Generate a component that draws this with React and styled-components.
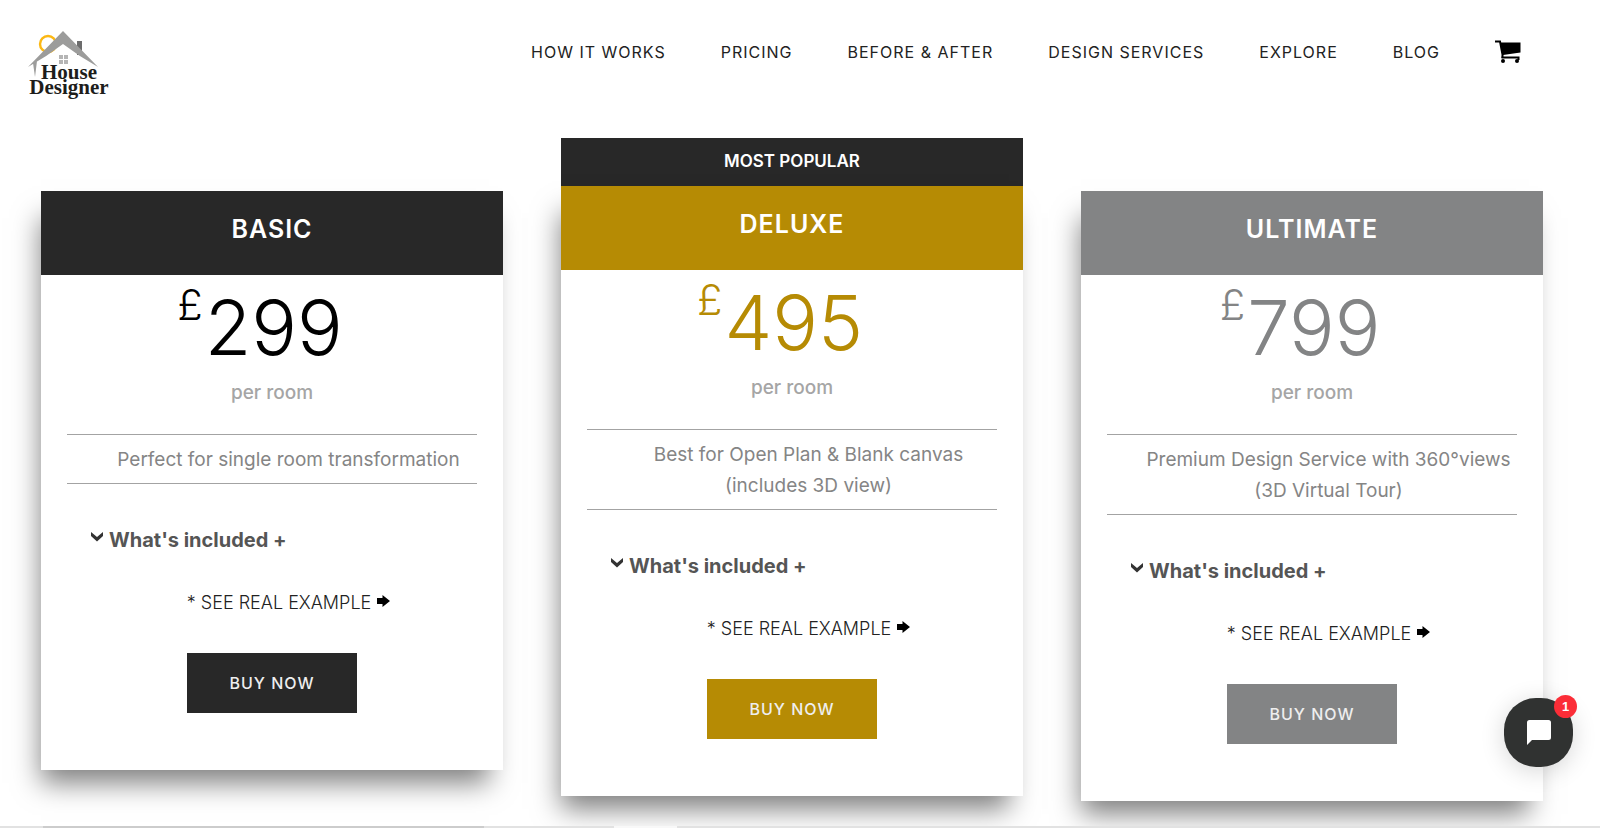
import styled, { createGlobalStyle } from "styled-components";

const plans = [
  {
    name: "BASIC",
    price: "299",
    color: "#282828",
    priceColor: "#000000",
    summary: ["Perfect for single room transformation"],
  },
  {
    name: "DELUXE",
    price: "495",
    color: "#b68b04",
    priceColor: "#b68b04",
    summary: ["Best for Open Plan & Blank canvas", "(includes 3D view)"],
    popular: true,
  },
  {
    name: "ULTIMATE",
    price: "799",
    color: "#838485",
    priceColor: "#838485",
    summary: ["Premium Design Service with 360°views", "(3D Virtual Tour)"],
  },
];

const links = [
  "HOW IT WORKS",
  "PRICING",
  "BEFORE & AFTER",
  "DESIGN SERVICES",
  "EXPLORE",
  "BLOG",
];

function Logo() {
  return (
    <LogoLink href="#home" aria-label="House Designer">
      <svg width="82" height="70" viewBox="0 0 82 70">
        <circle cx="20" cy="13" r="8" fill="none" stroke="#fcb813" strokeWidth="2.4" />
        <rect x="49" y="10" width="5" height="14" fill="#6c6c6c" />
        <path d="M0 36 L35 0 L70 36 Q52 26 35 13 Q18 26 0 36Z" fill="#9c9c9b" />
        <path d="M5 32 L9 30 L7 46Z" fill="#9c9c9b" />
        <g fill="#b5b5b5">
          <rect x="31" y="24" width="4" height="4" />
          <rect x="36" y="24" width="4" height="4" />
          <rect x="31" y="29" width="4" height="4" />
          <rect x="36" y="29" width="4" height="4" />
        </g>
        <LogoText x="41" y="48">House</LogoText>
        <LogoText x="41" y="63">Designer</LogoText>
      </svg>
    </LogoLink>
  );
}

function PlanCard({ plan }) {
  return (
    <Column $popular={plan.popular}>
      {plan.popular && <Popular>MOST POPULAR</Popular>}
      <Card>
        <CardHeader $color={plan.color}>{plan.name}</CardHeader>
        <Price $color={plan.priceColor}>
          <Currency>£</Currency>
          {plan.price}
        </Price>
        <Period>per room</Period>
        <Divider />
        <Summary>
          {plan.summary.map((line) => (
            <div key={line}>{line}</div>
          ))}
        </Summary>
        <Divider />
        <Included type="button">
          <svg width="12" height="10" viewBox="0 0 12 10">
            <path d="M0 0 L6 5 L12 0 V4 L6 9.500 L0 4Z" fill="#333333" />
          </svg>
          What's included +
        </Included>
        <Example href="#example">
          * SEE REAL EXAMPLE
          <svg width="13" height="12" viewBox="0 0 13 12">
            <path d="M0 3 H5.500 V0 L13 6 L5.500 12 V9 H0Z" fill="#000000" />
          </svg>
        </Example>
        <BuyButton $color={plan.color}>BUY NOW</BuyButton>
      </Card>
    </Column>
  );
}

export default function App() {
  return (
    <Page>
      <GlobalStyle />
      <Header>
        <Logo />
        <Nav>
          {links.map((link) => (
            <NavLink key={link} href="#menu">
              {link}
            </NavLink>
          ))}
          <CartLink href="#cart" aria-label="Cart">
            <svg width="26" height="24" viewBox="0 0 26 24">
              <path
                d="M0 1.500 H5 L7.500 14.500 V18"
                fill="none"
                stroke="#000000"
                strokeWidth="2"
              />
              <path d="M5 2.500 H25.500 V12.500 L8 15Z" fill="#000000" />
              <path d="M6.500 17.500 H23.500 V20" fill="none" stroke="#000000" strokeWidth="2" />
              <circle cx="8" cy="21" r="2" fill="#000000" />
              <circle cx="22" cy="21" r="2" fill="#000000" />
            </svg>
          </CartLink>
        </Nav>
      </Header>
      <Plans>
        {plans.map((plan) => (
          <PlanCard key={plan.name} plan={plan} />
        ))}
      </Plans>
      <BottomStrip />
      <ChatButton type="button" aria-label="Open chat">
        <svg width="24" height="25" viewBox="0 0 24 25">
          <path
            d="M2.500 0 H21.500 Q24 0 24 2.500 V17.500 Q24 20 21.500 20 H5 L0 25 V2.500 Q0 0 2.500 0Z"
            fill="#ffffff"
          />
        </svg>
        <Badge>1</Badge>
      </ChatButton>
    </Page>
  );
}

const GlobalStyle = createGlobalStyle`
  * {
    box-sizing: border-box;
  }
  body {
    margin: 0;
    background-color: #ffffff;
    font-family: Inter, sans-serif;
  }
`;

const Page = styled.div`
  display: flex;
  flex-direction: column;
  height: 100vh;
  overflow: hidden;
`;

const Header = styled.header`
  display: flex;
  flex-shrink: 0;
  justify-content: space-between;
  align-items: flex-start;
  padding: 31px 79px 0 28px;
`;

const LogoLink = styled.a`
  line-height: 0;
`;

const LogoText = styled.text`
  font-family: "Liberation Serif", serif;
  font-weight: 700;
  font-size: 21px;
  text-anchor: middle;
  fill: #1d1d1b;
`;

const Nav = styled.nav`
  display: flex;
  align-items: center;
  gap: 55px;
  height: 42px;
`;

const NavLink = styled.a`
  color: #222222;
  font-size: 16px;
  letter-spacing: 1px;
  text-decoration: none;
`;

const CartLink = styled.a`
  line-height: 0;
`;

const Plans = styled.main`
  display: grid;
  flex: 1;
  grid-template-columns: repeat(3, 1fr);
  align-items: start;
  gap: 58px;
  min-height: 0;
  padding: 37px 57px 0 41px;
  overflow: hidden;
`;

const Column = styled.section`
  padding-top: ${(props) => (props.$popular ? "0" : "53px")};
`;

const Popular = styled.div`
  height: 48px;
  background-color: #282828;
  color: #ffffff;
  font-size: 17px;
  font-weight: 600;
  line-height: 46px;
  text-align: center;
`;

const Card = styled.article`
  display: flex;
  flex-direction: column;
  align-items: center;
  padding-bottom: 57px;
  background-color: #ffffff;
  box-shadow: -7px 20px 26px -7px rgba(0, 0, 0, 0.5);
`;

const CardHeader = styled.h2`
  width: 100%;
  height: 84px;
  margin: 0;
  background-color: ${(props) => props.$color};
  color: #ffffff;
  font-size: 25px;
  font-weight: 600;
  letter-spacing: 1px;
  line-height: 76px;
  text-align: center;
`;

const Price = styled.div`
  display: flex;
  align-items: flex-start;
  gap: 2px;
  height: 100px;
  padding-right: 24px;
  color: ${(props) => props.$color};
  font-size: 76px;
  font-weight: 300;
  line-height: 104px;
`;

const Currency = styled.span`
  font-size: 42px;
  line-height: 60px;
`;

const Period = styled.div`
  height: 59px;
  color: #a5a5a5;
  font-size: 19px;
  font-weight: 500;
  line-height: 36px;
`;

const Divider = styled.hr`
  width: calc(100% - 52px);
  margin: 0;
  border: 0;
  border-top: 1px solid #a3a3a3;
`;

const Summary = styled.div`
  padding: 9px 0 8px 33px;
  color: #858585;
  font-size: 19px;
  line-height: 31px;
  text-align: center;
`;

const Included = styled.button`
  display: flex;
  align-items: center;
  align-self: flex-start;
  gap: 6px;
  margin: 40px 0 0 50px;
  padding: 0;
  border: 0;
  background: none;
  color: #555555;
  font-family: inherit;
  font-size: 20px;
  font-weight: 700;
  line-height: 32px;
  cursor: pointer;
  svg {
    margin-bottom: 6px;
  }
`;

const Example = styled.a`
  display: flex;
  align-items: center;
  gap: 6px;
  margin-top: 31px;
  padding-left: 33px;
  color: #222222;
  font-size: 18px;
  font-weight: 300;
  line-height: 32px;
  text-decoration: none;
  svg {
    margin-bottom: 4px;
  }
`;

const BuyButton = styled.button`
  width: 170px;
  height: 60px;
  margin-top: 34px;
  border: 0;
  background-color: ${(props) => props.$color};
  color: #eeeeee;
  font-family: inherit;
  font-size: 16px;
  font-weight: 500;
  letter-spacing: 1px;
  cursor: pointer;
`;

const BottomStrip = styled.div`
  flex-shrink: 0;
  height: 2px;
  background: linear-gradient(
    to right,
    #e2e2e2 43px,
    #cccccc 43px 484px,
    #e2e2e2 484px 614px,
    #f8f8f8 614px 677px,
    #e2e2e2 677px
  );
`;

const ChatButton = styled.button`
  position: fixed;
  right: 27px;
  bottom: 61px;
  display: flex;
  align-items: center;
  justify-content: center;
  width: 69px;
  height: 69px;
  padding: 0;
  border: 0;
  border-radius: 32px;
  background-color: #303231;
  box-shadow: 0 4px 24px rgba(0, 0, 0, 0.16);
  cursor: pointer;
`;

const Badge = styled.span`
  position: absolute;
  top: -3px;
  right: -4px;
  width: 23px;
  height: 23px;
  border-radius: 50%;
  background-color: #fb2d37;
  color: #ffffff;
  font-size: 13px;
  font-weight: 700;
  line-height: 23px;
`;
